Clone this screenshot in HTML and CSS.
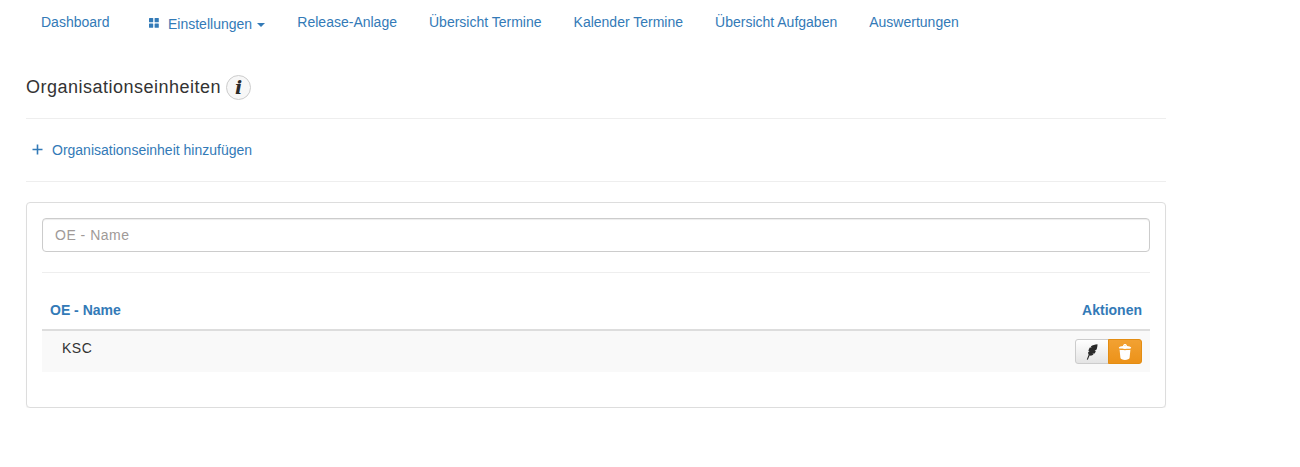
FILE: index.html
```html
<!DOCTYPE html>
<html lang="de">
<head>
<meta charset="utf-8">
<title>Organisationseinheiten</title>
<link rel="stylesheet" href="styles.css">
</head>
<body>
<nav class="nav">
  <a class="nav-link" href="#">Dashboard</a>
  <a class="nav-link nav-drop" href="#">
    <svg class="grid-icon" viewBox="0 0 10 10" width="10" height="10"><rect x="0" y="0" width="4.2" height="4.2" rx="0.5"/><rect x="5.6" y="0" width="4.2" height="4.2" rx="0.5"/><rect x="0" y="5.6" width="4.2" height="4.2" rx="0.5"/><rect x="5.6" y="5.6" width="4.2" height="4.2" rx="0.5"/></svg>
    <span>Einstellungen</span><i class="caret"></i>
  </a>
  <a class="nav-link" href="#">Release-Anlage</a>
  <a class="nav-link" href="#">Übersicht Termine</a>
  <a class="nav-link" href="#">Kalender Termine</a>
  <a class="nav-link" href="#">Übersicht Aufgaben</a>
  <a class="nav-link" href="#">Auswertungen</a>
</nav>
<main class="container">
  <header class="title-row">
    <h1 class="title">Organisationseinheiten</h1>
    <span class="info-badge"><span class="info-i">i</span></span>
  </header>
  <div class="add-row">
    <a class="add-link" href="#">
      <svg class="plus" viewBox="0 0 11 11" width="11" height="11"><path d="M5.5 0.5v10M0.5 5.5h10"/></svg>
      <span>Organisationseinheit hinzufügen</span>
    </a>
  </div>
  <section class="panel">
    <input class="search" type="text" placeholder="OE - Name">
    <hr class="panel-rule">
    <table class="table">
      <thead>
        <tr><th class="col-name">OE - Name</th><th class="col-actions">Aktionen</th></tr>
      </thead>
      <tbody>
        <tr>
          <td class="cell-name">KSC</td>
          <td class="cell-actions">
            <div class="btn-group">
              <button class="btn btn-default" type="button" aria-label="Bearbeiten">
                <svg viewBox="0 0 12 16" width="12" height="16"><path fill="#2a2a2a" d="M11.5 0.2C9 0.4 6.5 1 4.8 2.4L5.6 3.6 3.8 3.5C3 4.6 2.6 5.8 2.4 7L3.6 7.8 2.2 8C2 9 2.2 10 2.6 10.8L0.8 15.4 1.8 15.8 3.6 11.6C5 12 6.5 11.6 7.6 10.6L6.4 9.8 8.6 9.4C9.2 8.6 9.6 7.8 9.8 7L8.6 6.4 10.4 5.8C11.2 4 11.5 2 11.5 0.2Z"/></svg>
              </button>
              <button class="btn btn-warning" type="button" aria-label="Löschen">
                <svg viewBox="0 0 14 16" width="14" height="16"><path fill="#fff" d="M5 1.9C5.2 0.6 6.1 0.1 7 0.1S8.8 0.6 9 1.9C11 2.1 12.7 2.7 13.1 3.6 13.3 4.1 13 4.4 12.5 4.6 10.9 5 3.1 5 1.5 4.6 1 4.4 0.7 4.1 0.9 3.6 1.3 2.7 3 2.1 5 1.9ZM6 1.8H8C7.8 1.1 6.2 1.1 6 1.8ZM1.6 5.8C4.4 6.3 9.6 6.3 12.4 5.8L11.6 13.8C11.4 15.2 9.4 15.9 7 15.9S2.6 15.2 2.4 13.8Z"/></svg>
              </button>
            </div>
          </td>
        </tr>
      </tbody>
    </table>
  </section>
</main>
</body>
</html>
```

FILE: styles.css
```css
* { box-sizing: border-box; }

html, body {
  margin: 0;
  padding: 0;
  background: #fff;
}

body {
  font-family: "Liberation Sans", Arial, sans-serif;
  font-size: 14px;
  line-height: 20px;
  color: #333;
}

a {
  color: #337ab7;
  text-decoration: none;
}

.nav {
  display: flex;
  align-items: flex-start;
  padding: 12px 0 0 25px;
  height: 44px;
}

.nav-link {
  display: flex;
  align-items: center;
  padding: 0 16px;
}

.nav-drop {
  padding-left: 23px;
  margin-top: 2px;
}

.grid-icon {
  fill: #337ab7;
  margin-right: 9.5px;
  margin-bottom: 2px;
}

.caret {
  width: 0;
  height: 0;
  margin-left: 5px;
  margin-right: 0.3px;
  margin-top: 2px;
  border-top: 4px solid #337ab7;
  border-left: 4px solid transparent;
  border-right: 4px solid transparent;
}

.container {
  width: 1140px;
  margin-left: 26px;
}

.title-row {
  display: flex;
  align-items: center;
  padding: 30px 0 18px;
  height: 75px;
  border-bottom: 1px solid #eee;
}

.title {
  margin: 0;
  font-size: 18px;
  font-weight: 400;
  line-height: 20px;
  letter-spacing: 0.5px;
  color: #333;
}

.info-badge {
  display: flex;
  align-items: center;
  justify-content: center;
  width: 25px;
  height: 25px;
  margin-left: 5px;
  border: 1px solid #ccc;
  border-radius: 50%;
  background: #f7f7f7;
}

.info-i {
  font-family: "DejaVu Serif", serif;
  font-size: 19px;
  font-weight: 700;
  font-style: italic;
  color: #2a2a2a;
}

.add-row {
  display: flex;
  align-items: center;
  height: 63px;
  padding-left: 6px;
  border-bottom: 1px solid #eee;
}

.add-link {
  display: flex;
  align-items: center;
}

.plus {
  fill: none;
  stroke: #337ab7;
  stroke-width: 1.6;
  margin-right: 9px;
  margin-bottom: 2px;
}

.panel {
  height: 206px;
  margin-top: 20px;
  padding: 15px;
  background: #fff;
  border: 1px solid #ddd;
  border-radius: 4px;
  box-shadow: 0 1px 1px rgba(0, 0, 0, .05);
}

.search {
  display: block;
  width: 100%;
  height: 34px;
  padding: 6px 12px;
  font-family: inherit;
  font-size: 14px;
  letter-spacing: 0.5px;
  color: #555;
  background: #fff;
  border: 1px solid #ccc;
  border-radius: 4px;
  box-shadow: inset 0 1px 1px rgba(0, 0, 0, .075);
}

.search::placeholder {
  color: #a09a98;
  opacity: 1;
}

.panel-rule {
  height: 1px;
  margin: 20px 0;
  border: 0;
  background: #eee;
}

.table {
  width: 100%;
  border-collapse: collapse;
}

.table th {
  padding: 7px 8px 9px;
  font-weight: 700;
  color: #337ab7;
  vertical-align: bottom;
  border-bottom: 2px solid #ddd;
}

.col-name { text-align: left; }
.col-actions { text-align: right; }

.table tbody tr { background: #f9f9f9; }

.table td {
  height: 42px;
  vertical-align: top;
}

.cell-name {
  padding: 7px 20px;
  letter-spacing: 0.5px;
}

.cell-actions {
  padding: 8px 8px 0;
  text-align: right;
}

.btn-group {
  display: inline-flex;
  vertical-align: top;
}

.btn {
  display: flex;
  align-items: center;
  justify-content: center;
  width: 34px;
  height: 25px;
  padding: 0;
  border: 1px solid;
}

.btn-default {
  border-color: #ccc;
  border-radius: 3px 0 0 3px;
  background: linear-gradient(#fff, #e4e4e4);
}

.btn-warning {
  margin-left: -1px;
  border-color: #e38d13;
  border-radius: 0 3px 3px 0;
  background: linear-gradient(#f2a132, #ec9219);
}
```
